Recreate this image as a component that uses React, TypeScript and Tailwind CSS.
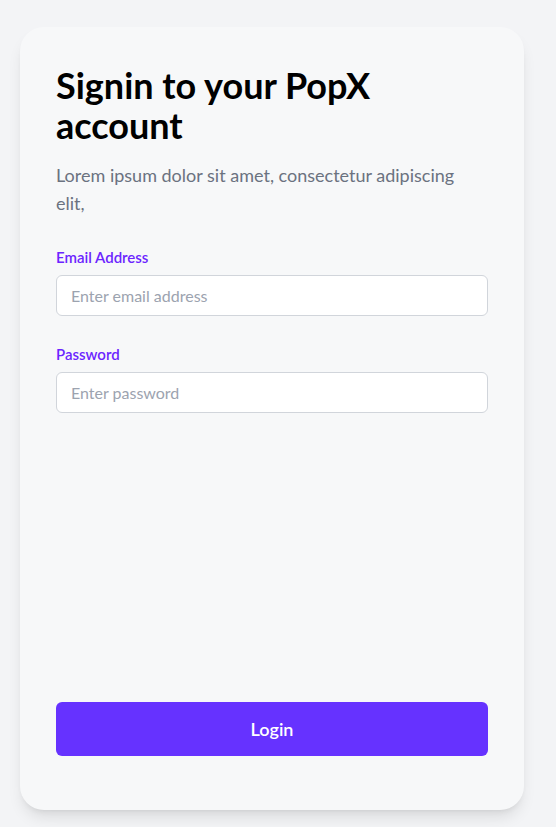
export default function App() {
  return (
    <div className="min-h-screen bg-[#f3f4f6] flex pl-5 pt-[27px] pb-[17px] font-['Lato',sans-serif]">
      <div className="w-[504px] h-[783px] bg-[#f7f8f9] rounded-3xl shadow-lg flex flex-col px-9 pt-[38px] pb-[54px]">
        <h1 className="text-[36px] leading-10 font-bold text-black max-w-[360px]">
          Signin to your PopX account
        </h1>
        <p className="mt-4 text-lg leading-7 text-[#6b7280] max-w-[420px]">
          Lorem ipsum dolor sit amet, consectetur adipiscing elit,
        </p>

        <div className="mt-[30px] flex flex-col gap-7">
          <label className="flex flex-col gap-2">
            <span className="text-[15px] leading-5 font-semibold text-[#6c25ff]">Email Address</span>
            <input
              type="email"
              placeholder="Enter email address"
              className="h-[41px] w-full rounded-md border border-[#d1d5db] bg-white px-[14px] text-base text-gray-900 placeholder:text-[#9ca3af] outline-none"
            />
          </label>
          <label className="flex flex-col gap-2">
            <span className="text-[15px] leading-5 font-semibold text-[#6c25ff]">Password</span>
            <input
              type="password"
              placeholder="Enter password"
              className="h-[41px] w-full rounded-md border border-[#d1d5db] bg-white px-[14px] text-base text-gray-900 placeholder:text-[#9ca3af] outline-none"
            />
          </label>
        </div>

        <button className="mt-auto h-[54px] w-full rounded-md bg-[#6632ff] text-lg font-semibold text-white">
          Login
        </button>
      </div>
    </div>
  );
}
